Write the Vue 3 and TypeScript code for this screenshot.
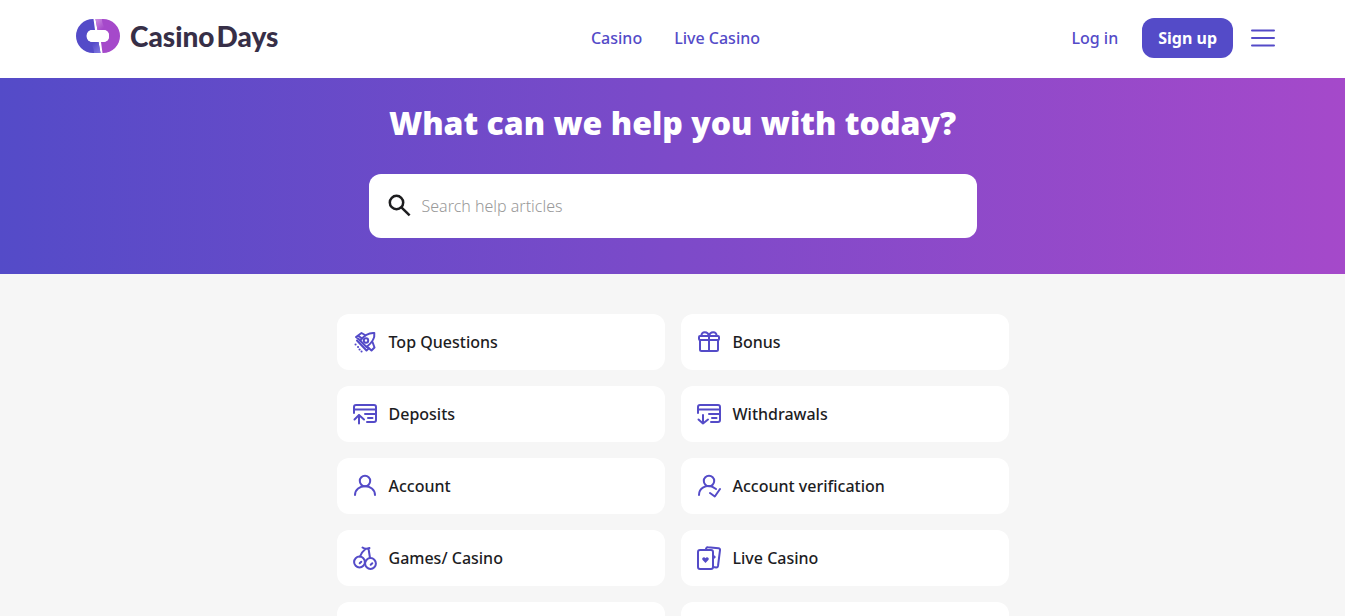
<script setup lang="ts">
import { ref } from 'vue'

type IconName = 'rocket' | 'gift' | 'deposit' | 'withdraw' | 'user' | 'userCheck' | 'cherry' | 'cards'

interface Topic {
  label: string
  icon: IconName
}

const query = ref<string>('')

const topics: Topic[] = [
  { label: 'Top Questions', icon: 'rocket' },
  { label: 'Bonus', icon: 'gift' },
  { label: 'Deposits', icon: 'deposit' },
  { label: 'Withdrawals', icon: 'withdraw' },
  { label: 'Account', icon: 'user' },
  { label: 'Account verification', icon: 'userCheck' },
  { label: 'Games/ Casino', icon: 'cherry' },
  { label: 'Live Casino', icon: 'cards' },
]
</script>

<template>
  <div class="page">
    <header class="header">
      <a href="#" class="logo">
        <svg class="logo-mark" viewBox="0 0 44 36" aria-hidden="true">
          <defs>
            <linearGradient id="markLeft" x1="0" y1="0" x2="1" y2="1">
              <stop offset="0.3" stop-color="#544bc8" />
              <stop offset="1" stop-color="#8379e2" />
            </linearGradient>
            <linearGradient id="markRight" x1="0" y1="0" x2="1" y2="1">
              <stop offset="0" stop-color="#cf91e2" />
              <stop offset="0.7" stop-color="#a549ca" />
            </linearGradient>
          </defs>
          <path fill="#544bc8" d="M17 1h0.500L19 12H16.500A6 6 0 0 0 16.500 24H22.500L24.500 35H17A17 17 0 0 1 17 1Z" />
          <path fill="url(#markLeft)" d="M12 23C14 24.500 18 24 22.500 24L24.500 35H18C18 30 16 26 12 23Z" />
          <path fill="#a549ca" d="M19.500 1H27A17 17 0 0 1 27 35H26.500L25 24H27A6 6 0 0 0 27 12H21.500Z" />
          <path fill="url(#markRight)" d="M19.500 1H26C26 6 28 9 32 13C29 11.500 26 12 21.500 12Z" />
          <rect x="11" y="12" width="22" height="12" rx="5" fill="#fff" />
        </svg>
        <span class="logo-text"><span>Casino</span><span>Days</span></span>
      </a>
      <nav class="nav">
        <a href="#">Casino</a>
        <a href="#">Live Casino</a>
      </nav>
      <div class="actions">
        <a href="#" class="login">Log in</a>
        <button type="button" class="signup">Sign up</button>
        <button type="button" class="menu" aria-label="Menu">
          <svg viewBox="0 0 24 24" aria-hidden="true">
            <path d="M1 4.500h22M1 12h22M1 19.500h22" />
          </svg>
        </button>
      </div>
    </header>

    <section class="hero">
      <h1>What can we help you with today?</h1>
      <label class="search">
        <svg viewBox="0 0 24 24" aria-hidden="true">
          <circle cx="8.500" cy="8.500" r="6.700" />
          <path d="M13.400 13.400L21.600 21.400" />
        </svg>
        <input v-model="query" type="search" placeholder="Search help articles" aria-label="Search help articles" />
      </label>
    </section>

    <main class="topics">
      <a v-for="topic in topics" :key="topic.label" href="#" class="topic">
        <svg class="icon" viewBox="0 0 24 24" aria-hidden="true">
          <g v-if="topic.icon === 'rocket'">
            <path d="M21.300 3C16 2.500 12 4.500 7 10.500L13.500 17C19.500 12.500 22 8 21.300 3Z" />
            <circle cx="13" cy="10.500" r="2.200" />
            <path d="M12 5L8.500 3L3 7L7.500 10.500M19.500 12L21.500 17.500L18.500 20.500L14 16.500M4 10.500L13.500 20.500L16 18M5 5.500L9 8.500" />
            <path d="M2.500 14.500h.1M5 17h.1M6.500 19.500h.1M8.500 21.500h.1" />
          </g>
          <g v-else-if="topic.icon === 'gift'">
            <rect x="2" y="6" width="20" height="4" rx="1" />
            <path d="M3 10v9.500a1.500 1.500 0 0 0 1.500 1.500h15a1.500 1.500 0 0 0 1.500-1.500V10M12 6v15M12 6C11 .8 4 1 4.500 6M12 6C13 .8 20 1 19.500 6" />
          </g>
          <g v-else-if="topic.icon === 'deposit'">
            <path d="M1 11V5a2 2 0 0 1 2-2h18a2 2 0 0 1 2 2v13a2 2 0 0 1-2 2H14M1 7.500h22M12 12h11M15 16h4.500M6 21.500V13M1.500 17.500L6 13L11 17.500" />
          </g>
          <g v-else-if="topic.icon === 'withdraw'">
            <path d="M1 11V5a2 2 0 0 1 2-2h18a2 2 0 0 1 2 2v13a2 2 0 0 1-2 2H14M1 7.500h22M12 12h11M15 16h4.500M6 13v8.500M1.500 17.500L6 21.500L11 17.500" />
          </g>
          <g v-else-if="topic.icon === 'user'">
            <circle cx="12" cy="7" r="5.200" />
            <path d="M2 21C2 9.300 22 9.300 22 21" />
          </g>
          <g v-else-if="topic.icon === 'userCheck'">
            <circle cx="12" cy="7" r="5.200" />
            <path d="M2 21C2 14 9 10.500 15.500 12.800L19 15M13 19L17.800 22.500L23 15" />
          </g>
          <g v-else-if="topic.icon === 'cherry'">
            <circle cx="6.500" cy="16" r="5.400" />
            <circle cx="17.500" cy="17.500" r="5.400" />
            <path d="M7 10.500C8.500 6.500 10 5 12 3.500M17 12L15.500 2.500M9.500 1.500C12 3.500 14 3 16.500 2" />
            <path d="M6.700 17.300L8.300 15.700M17.700 18.800L19.300 17.200" />
          </g>
          <g v-else>
            <rect x="1" y="4" width="15" height="19" rx="2" />
            <path d="M9 3L9.500 1.800Q10 1 11 1.200L21.500 2.300Q23.200 2.500 23 4.200L21 20Q20.700 21.500 19.200 21.400L16 21" />
            <path class="solid" d="M8.500 17L5.400 13.800C4.400 11.500 7.500 10.200 8.500 12.200C9.500 10.200 12.600 11.500 11.600 13.800ZM16.500 8.500L19 11L16.500 13.500Z" />
          </g>
        </svg>
        <span>{{ topic.label }}</span>
      </a>
      <div class="topic"></div>
      <div class="topic"></div>
    </main>
  </div>
</template>

<style>
body {
  background: #f6f6f6;
}
</style>

<style scoped>
.page {
  height: 100vh;
  overflow: hidden;
  font-family: "Noto Sans", "Open Sans", sans-serif;
  font-size: 16px;
  line-height: 24px;
  color: #1d1d1f;
  background: #f6f6f6;
}
.page * {
  box-sizing: border-box;
}
a {
  color: inherit;
  text-decoration: none;
}
button {
  border: 0;
  font: inherit;
  cursor: pointer;
}
svg {
  display: block;
  flex: none;
  fill: none;
}
.header {
  display: grid;
  grid-template-columns: 1fr auto 1fr;
  align-items: center;
  min-height: 78px;
  padding: 0 70px 2px 76px;
  background: #fff;
  color: #544bc8;
  font-weight: 500;
}
.logo {
  display: flex;
  align-items: center;
  gap: 10px;
  padding-bottom: 4px;
}
.logo-mark {
  width: 44px;
  height: 36px;
}
.logo-text {
  display: flex;
  gap: 2px;
  font-family: Lato, sans-serif;
  font-size: 28px;
  font-weight: 900;
  line-height: 36px;
  color: #372f47;
}
.nav {
  display: flex;
  gap: 32px;
}
.actions {
  display: flex;
  align-items: center;
  justify-content: flex-end;
}
.login {
  margin-right: 24px;
}
.signup {
  height: 40px;
  padding: 0 16px;
  margin-right: 18px;
  border-radius: 12px;
  background: #544bc8;
  color: #fff;
  font-weight: 700;
}
.menu {
  padding: 0;
  background: none;
}
.menu svg {
  width: 24px;
  height: 24px;
  stroke: #544bc8;
  stroke-width: 2;
  stroke-linecap: round;
}
.hero {
  display: flex;
  flex-direction: column;
  align-items: center;
  gap: 30px;
  padding: 24px 16px 36px;
  background: linear-gradient(90deg, #544bc8, #a549ca);
}
h1 {
  margin: 0;
  font-family: "Open Sans", "Noto Sans", sans-serif;
  font-size: 32px;
  line-height: 42px;
  font-weight: 800;
  color: #fff;
}
.search {
  display: flex;
  align-items: center;
  gap: 10px;
  width: 100%;
  max-width: 608px;
  height: 64px;
  padding: 0 19px;
  border-radius: 12px;
  background: #fff;
}
.search svg {
  width: 24px;
  height: 24px;
  stroke: #1d1d1f;
  stroke-width: 2.5;
}
.search input {
  flex: 1;
  min-width: 0;
  padding: 0;
  border: 0;
  outline: 0;
  background: none;
  font: inherit;
  font-weight: 300;
}
.search input::placeholder {
  color: #999;
}
.topics {
  display: grid;
  grid-template-columns: 1fr 1fr;
  gap: 16px;
  max-width: 672px;
  margin: 0 auto;
  padding: 40px 0;
}
.topic {
  display: flex;
  align-items: center;
  gap: 12px;
  min-height: 56px;
  padding: 0 16px;
  border-radius: 12px;
  background: #fff;
  font-weight: 500;
}
.icon {
  width: 24px;
  height: 24px;
  stroke: #544bc8;
  stroke-width: 2;
  stroke-linecap: round;
  stroke-linejoin: round;
}
.solid {
  fill: #544bc8;
  stroke: none;
}
</style>
